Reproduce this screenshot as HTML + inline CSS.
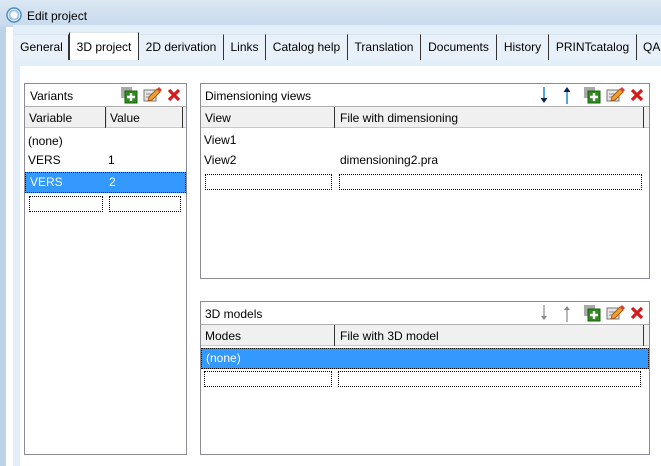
<!DOCTYPE html>
<html><head><meta charset="utf-8"><style>
*{margin:0;padding:0;box-sizing:border-box}
body{width:661px;height:466px;overflow:hidden;background:#fff;font-family:"Liberation Sans",sans-serif;font-size:12px;color:#000;position:relative}
.a{position:absolute}
.t{white-space:nowrap}
.tab{position:absolute;top:34px;height:26px;background:#e8f1f9;border-right:1px solid #333;border-top:1px solid #d9e4ee;padding:5px 0 0 0;text-align:center;font-size:12px}
.panel{position:absolute;border:1px solid #8c8c96;background:#fff}
.hdr{position:absolute;height:22px;background:#f0f0f0;border-bottom:1px solid #c8c8c8;border-top:1px solid #b0b0b0;padding:4px 0 0 4px}
.dot{position:absolute;border:1px dotted #000;height:16px}
.sel{position:absolute;background:#3399ff;color:#fff;border:1px dotted #000;height:21px;padding:2px 0 0 4px}
</style></head><body>
<div class="a" style="left:0;top:0;width:661px;height:27px;background:linear-gradient(#dbe7f3,#c6d9ec)"></div>
<svg class="a" style="left:6px;top:7px" width="16" height="16"><circle cx="8" cy="8" r="7" fill="#fff" stroke="#4a8fc4" stroke-width="1.5"/><circle cx="8" cy="8" r="4.5" fill="none" stroke="#9cc7e8" stroke-width="2"/></svg>
<div class="a t" style="left:27px;top:9px;font-size:12px">Edit project</div>
<div class="a" style="left:0;top:27px;width:6px;height:439px;background:#bcd4ea"></div>
<div class="a" style="left:6px;top:27px;width:655px;height:439px;background:#fff"></div>
<div class="a" style="left:13px;top:25px;width:648px;height:441px;background:#e3eff8"></div>
<div class="a" style="left:20px;top:66px;width:641px;height:400px;background:#fff"></div>
<div class="tab" style="left:15px;width:54px">General</div>
<div class="tab" style="left:69px;width:70px;top:32px;height:28px;background:#fff;border-left:1px solid #333;padding-top:7px">3D project</div>
<div class="tab" style="left:139px;width:85px">2D derivation</div>
<div class="tab" style="left:224px;width:42px">Links</div>
<div class="tab" style="left:266px;width:82px">Catalog help</div>
<div class="tab" style="left:348px;width:73px">Translation</div>
<div class="tab" style="left:421px;width:76px">Documents</div>
<div class="tab" style="left:497px;width:52px">History</div>
<div class="tab" style="left:549px;width:88px">PRINTcatalog</div>
<div class="tab" style="left:637px;width:40px;text-align:left;padding-left:6px">QA</div>

<svg width="0" height="0" style="position:absolute"><defs>
<g id="add"><rect x="0" y="0" width="11" height="11" fill="#aaa"/><rect x="4" y="4" width="12" height="12" fill="#2e8b1e" stroke="#1c5e12"/><path d="M10 6v8M6 10h8" stroke="#fff" stroke-width="2.4"/></g>
<g id="edit"><rect x="1" y="4" width="12" height="11" fill="#e6e6e6" stroke="#777"/><path d="M3 8h6M3 11h5" stroke="#888"/><path d="M6 11l8-8 3 3-8 8-4 1z" fill="#f0a030" stroke="#b05a10"/><path d="M14 3l2-2 3 3-2 2z" fill="#d04040"/></g>
<g id="del"><path d="M3 3l10 10M13 3L3 13" stroke="#d41a1a" stroke-width="3.2"/></g>
</defs></svg>

<div class="panel" style="left:24px;top:83px;width:163px;height:372px">
  <div class="a t" style="left:5px;top:5px">Variants</div>
  <svg class="a" style="left:96px;top:3px" width="17" height="17"><use href="#add"/></svg>
  <svg class="a" style="left:118px;top:2px" width="20" height="18"><use href="#edit"/></svg>
  <svg class="a" style="left:141px;top:3px" width="16" height="16"><use href="#del"/></svg>
  <div class="hdr" style="left:0;top:22px;width:161px"></div>
  <div class="a t" style="left:4px;top:27px">Variable</div>
  <div class="a" style="left:80px;top:23px;width:2px;height:21px;border-left:1px solid #333;border-right:1px solid #ddd"></div>
  <div class="a t" style="left:85px;top:27px">Value</div>
  <div class="a" style="left:157px;top:23px;width:2px;height:21px;border-left:1px solid #333"></div>
  <div class="a t" style="left:3px;top:50px">(none)</div>
  <div class="a t" style="left:3px;top:69px">VERS</div>
  <div class="a t" style="left:83px;top:69px">1</div>
  <div class="sel" style="left:0;top:88px;width:161px">VERS<span style="position:absolute;left:83px;top:2px">2</span></div>
  <div class="dot" style="left:4px;top:112px;width:74px"></div>
  <div class="dot" style="left:84px;top:112px;width:72px"></div>
</div>

<div class="panel" style="left:200px;top:83px;width:450px;height:196px">
  <div class="a t" style="left:4px;top:5px">Dimensioning views</div>
  <svg class="a" style="left:338px;top:2px" width="10" height="18"><path d="M5 1v13" stroke="#2a8fd0" stroke-width="1.6"/><path d="M1.5 12l3.5 5 3.5-5z" fill="#102050"/></svg>
  <svg class="a" style="left:361px;top:2px" width="10" height="18"><path d="M5 5v13" stroke="#2a8fd0" stroke-width="1.6"/><path d="M1.5 6l3.5-5 3.5 5z" fill="#102050"/></svg>
  <svg class="a" style="left:383px;top:3px" width="17" height="17"><use href="#add"/></svg>
  <svg class="a" style="left:405px;top:2px" width="20" height="18"><use href="#edit"/></svg>
  <svg class="a" style="left:428px;top:3px" width="16" height="16"><use href="#del"/></svg>
  <div class="hdr" style="left:0;top:22px;width:448px"></div>
  <div class="a t" style="left:4px;top:27px">View</div>
  <div class="a" style="left:133px;top:23px;width:2px;height:21px;border-left:1px solid #333"></div>
  <div class="a t" style="left:139px;top:27px">File with dimensioning</div>
  <div class="a" style="left:442px;top:23px;width:2px;height:21px;border-left:1px solid #333"></div>
  <div class="a t" style="left:3px;top:49px">View1</div>
  <div class="a t" style="left:3px;top:69px">View2</div>
  <div class="a t" style="left:139px;top:69px">dimensioning2.pra</div>
  <div class="dot" style="left:4px;top:90px;width:127px"></div>
  <div class="dot" style="left:138px;top:90px;width:303px"></div>
</div>

<div class="panel" style="left:200px;top:301px;width:450px;height:154px">
  <div class="a t" style="left:4px;top:5px">3D models</div>
  <svg class="a" style="left:338px;top:2px" width="10" height="18"><path d="M5 1v13" stroke="#999" stroke-width="1.4"/><path d="M2 12l3 4 3-4z" fill="#888"/></svg>
  <svg class="a" style="left:361px;top:2px" width="10" height="18"><path d="M5 5v13" stroke="#999" stroke-width="1.4"/><path d="M2 6l3-4 3 4z" fill="#888"/></svg>
  <svg class="a" style="left:383px;top:3px" width="17" height="17"><use href="#add"/></svg>
  <svg class="a" style="left:405px;top:2px" width="20" height="18"><use href="#edit"/></svg>
  <svg class="a" style="left:428px;top:3px" width="16" height="16"><use href="#del"/></svg>
  <div class="hdr" style="left:0;top:22px;width:448px"></div>
  <div class="a t" style="left:4px;top:27px">Modes</div>
  <div class="a" style="left:133px;top:23px;width:2px;height:21px;border-left:1px solid #333"></div>
  <div class="a t" style="left:139px;top:27px">File with 3D model</div>
  <div class="a" style="left:442px;top:23px;width:2px;height:21px;border-left:1px solid #333"></div>
  <div class="sel" style="left:0;top:46px;width:448px">(none)</div>
  <div class="dot" style="left:3px;top:69px;width:128px"></div>
  <div class="dot" style="left:137px;top:69px;width:303px"></div>
</div>
</body></html>
